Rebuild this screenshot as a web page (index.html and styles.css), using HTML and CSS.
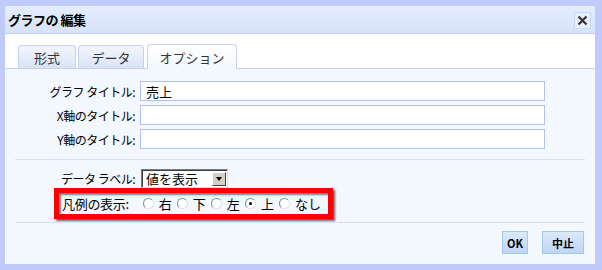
FILE: index.html
```html
<!DOCTYPE html>
<html lang="ja">
<head>
    <meta charset="UTF-8">
    <title>グラフの 編集</title>
    <link rel="stylesheet" href="styles.css">
</head>
<body>
    <div class="dialog">
        <div class="titlebar">
            <span class="title">グラフの 編集</span>
            <button class="close" title="閉じる">
                <svg width="11" height="11" viewBox="0 0 11 11">
                    <path d="M1.5 1.5 L9.5 9.5 M9.5 1.5 L1.5 9.5" stroke="#333" stroke-width="2.2" />
                </svg>
            </button>
        </div>
        <div class="tabs">
            <div class="tab tab-format">形式</div>
            <div class="tab tab-data">データ</div>
            <div class="tab tab-option active">オプション</div>
        </div>
        <div class="panel">
            <div class="fields">
                <div class="row">
                    <label>グラフ タイトル:</label>
                    <input type="text" value="売上">
                </div>
                <div class="row">
                    <label>X軸のタイトル:</label>
                    <input type="text">
                </div>
                <div class="row">
                    <label>Y軸のタイトル:</label>
                    <input type="text">
                </div>
            </div>
            <div class="sep"></div>
            <div class="row select-row">
                <label>データ ラベル:</label>
                <div class="select">
                    <span class="select-value">値を表示</span>
                    <span class="select-btn"></span>
                </div>
            </div>
            <div class="legend-box">
                <span class="legend-label">凡例の表示:</span>
                <span class="radio"></span><span class="opt">右</span>
                <span class="radio"></span><span class="opt">下</span>
                <span class="radio"></span><span class="opt">左</span>
                <span class="radio checked"></span><span class="opt">上</span>
                <span class="radio"></span><span class="opt">なし</span>
            </div>
            <div class="sep sep-bottom"></div>
            <div class="actions">
                <button class="btn btn-ok">OK</button>
                <button class="btn btn-cancel">中止</button>
            </div>
        </div>
    </div>
</body>
</html>
```

FILE: styles.css
```css
html, body {
    margin: 0;
    padding: 0;
}
body {
    background: #bfcafb;
    font-family: "Noto Sans CJK JP", "DejaVu Sans", sans-serif;
    font-size: 12px;
    color: #000;
    width: 602px;
    height: 270px;
    overflow: hidden;
}
.dialog {
    margin: 6px 7px 0 5px;
    height: 258px;
    background: #fff;
    display: flex;
    flex-direction: column;
}
.titlebar {
    height: 27px;
    border-bottom: 1px solid #c3cdf3;
    background: linear-gradient(#e5edfd, #d7e3fa);
    display: flex;
    align-items: center;
    justify-content: space-between;
    padding: 0 4px 0 3px;
}
.title {
    font-weight: bold;
    font-size: 13px;
    letter-spacing: -0.5px;
}
.close {
    width: 17px;
    height: 17px;
    padding: 0;
    margin-top: 1px;
    border: 1px solid #c9d8f7;
    background: #e9f0fd;
    display: flex;
    align-items: center;
    justify-content: center;
}
.tabs {
    height: 24px;
    padding: 10px 0 0 13px;
    display: flex;
    gap: 2px;
    border-bottom: 1px solid #c6d0f3;
    align-items: flex-end;
}
.tab {
    height: 23px;
    box-sizing: border-box;
    border: 1px solid #c9d1f2;
    border-bottom: none;
    border-radius: 4px 4px 0 0;
    background: linear-gradient(#f3f6fd, #d9e2f6);
    color: #333;
    font-size: 13px;
    display: flex;
    align-items: center;
    justify-content: center;
    padding-top: 1px;
}
.tab-format { width: 58px; }
.tab-data { width: 66px; }
.tab-option { width: 90px; margin-left: 1px; }
.tab.active {
    height: 25px;
    margin-bottom: -1px;
    background: linear-gradient(#ffffff, #f3f7fe);
}
.panel {
    flex: 1;
    background: #f3f7fe;
    padding-top: 12px;
}
.fields {
    display: flex;
    flex-direction: column;
    gap: 4px;
}
.row {
    display: flex;
    align-items: center;
}
.row label {
    width: 130px;
    margin-right: 5px;
    text-align: right;
    white-space: nowrap;
    letter-spacing: -0.5px;
}
.row input {
    width: 405px;
    height: 20px;
    box-sizing: border-box;
    border: 1px solid #b2c1f5;
    background: #fff;
    font-family: inherit;
    font-size: 13px;
    padding: 0 5px;
    margin: 0;
    outline: none;
}
.sep {
    height: 1px;
    background: #d9e0ee;
    margin: 10px 10px 9px;
}
.sep-bottom {
    margin: 3px 11px 8px 10px;
}
.select-row {
    height: 19px;
}
.select {
    margin-left: 1px;
    width: 87px;
    height: 19px;
    box-sizing: border-box;
    border: 1px solid #7a7a7a;
    border-right-color: #ddd;
    border-bottom-color: #ddd;
    box-shadow: inset 1px 1px 0 #404040;
    background: #fff;
    display: flex;
    align-items: center;
    justify-content: space-between;
    padding: 0 1px 0 4px;
}
.select-value {
    font-size: 13px;
}
.select-btn {
    width: 14px;
    height: 14px;
    box-sizing: border-box;
    background: #d4d0c8;
    border: 1px solid #fff;
    border-right-color: #404040;
    border-bottom-color: #404040;
    position: relative;
}
.select-btn::after {
    content: "";
    position: absolute;
    left: 3px;
    top: 4px;
    border-left: 3.5px solid transparent;
    border-right: 3.5px solid transparent;
    border-top: 4px solid #000;
}
.legend-box {
    margin-left: 49px;
    width: 279px;
    height: 31px;
    box-sizing: border-box;
    border: 5px solid #ff0000;
    box-shadow: 2px 2px 2px rgba(40, 40, 40, 0.75), inset 2px 2px 2px rgba(40, 40, 40, 0.6);
    display: flex;
    align-items: center;
    padding-left: 3px;
    font-size: 13px;
    white-space: nowrap;
}
.legend-box > span {
    flex-shrink: 0;
}
.legend-label {
    margin-right: 14px;
    letter-spacing: -0.3px;
}
.radio {
    width: 11px;
    height: 11px;
    box-sizing: border-box;
    border-radius: 50%;
    border: 1px solid #8a8a8a;
    border-right-color: #e0e0e0;
    border-bottom-color: #e0e0e0;
    background: #fff;
    margin-right: 5px;
    position: relative;
}
.radio.checked::after {
    content: "";
    position: absolute;
    left: 3px;
    top: 3px;
    width: 3px;
    height: 3px;
    border-radius: 50%;
    background: #000;
}
.opt {
    margin-right: 5px;
}
.actions {
    display: flex;
    justify-content: flex-end;
    gap: 14px;
    padding-right: 11px;
}
.btn {
    height: 23px;
    box-sizing: border-box;
    border: 1px solid #a4c9ee;
    background: linear-gradient(#dce9fc, #bed5f6);
    font-family: inherit;
    font-weight: bold;
    font-size: 11px;
    padding: 0;
    margin: 0;
}
.btn-ok { width: 26px; }
.btn-cancel { width: 42px; }
```
